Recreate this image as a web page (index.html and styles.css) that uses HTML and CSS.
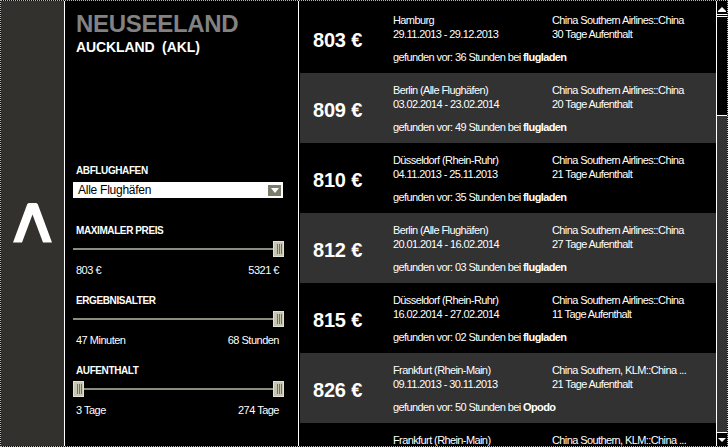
FILE: index.html
```html
<!DOCTYPE html>
<html lang="de">
<head>
<meta charset="utf-8">
<title>Neuseeland – Flüge</title>
<link rel="stylesheet" href="styles.css">
</head>
<body>
<div class="frame">
  <div class="strip">
    <svg class="logo" width="42" height="42" viewBox="0 0 42 42">
      <path d="M1 40.5 L15.2 2.3 Q16 1 17.5 1 L23.5 1 Q25 1 25.8 2.3 L40 40.5 L31 40.5 L20.5 12.5 L10 40.5 Z" fill="#fff"/>
    </svg>
  </div>
  <aside class="sidebar">
    <h1 class="country">NEUSEELAND</h1>
    <h2 class="city">AUCKLAND&nbsp; (AKL)</h2>

    <div class="field first">
      <div class="label">ABFLUGHAFEN</div>
      <div class="select">
        <span>Alle Flughäfen</span>
        <span class="select-btn"><span class="tri-down"></span></span>
      </div>
    </div>

    <div class="field">
      <div class="label">MAXIMALER PREIS</div>
      <div class="slider">
        <div class="track"></div>
        <div class="handle right"></div>
      </div>
      <div class="values"><span>803 €</span><span>5321 €</span></div>
    </div>

    <div class="field">
      <div class="label">ERGEBNISALTER</div>
      <div class="slider">
        <div class="track"></div>
        <div class="handle right"></div>
      </div>
      <div class="values"><span>47 Minuten</span><span>68 Stunden</span></div>
    </div>

    <div class="field">
      <div class="label">AUFENTHALT</div>
      <div class="slider">
        <div class="track"></div>
        <div class="handle left"></div>
        <div class="handle right"></div>
      </div>
      <div class="values"><span>3 Tage</span><span>274 Tage</span></div>
    </div>
  </aside>

  <main class="list">
    <div class="row">
      <div class="price">803 €</div>
      <div class="c1">Hamburg<br>29.11.2013 - 29.12.2013</div>
      <div class="c2">China Southern Airlines::China<br>30 Tage Aufenthalt</div>
      <div class="found">gefunden vor: 36 Stunden bei <b>flugladen</b></div>
    </div>
    <div class="row alt">
      <div class="price">809 €</div>
      <div class="c1">Berlin (Alle Flughäfen)<br>03.02.2014 - 23.02.2014</div>
      <div class="c2">China Southern Airlines::China<br>20 Tage Aufenthalt</div>
      <div class="found">gefunden vor: 49 Stunden bei <b>flugladen</b></div>
    </div>
    <div class="row">
      <div class="price">810 €</div>
      <div class="c1">Düsseldorf (Rhein-Ruhr)<br>04.11.2013 - 25.11.2013</div>
      <div class="c2">China Southern Airlines::China<br>21 Tage Aufenthalt</div>
      <div class="found">gefunden vor: 35 Stunden bei <b>flugladen</b></div>
    </div>
    <div class="row alt">
      <div class="price">812 €</div>
      <div class="c1">Berlin (Alle Flughäfen)<br>20.01.2014 - 16.02.2014</div>
      <div class="c2">China Southern Airlines::China<br>27 Tage Aufenthalt</div>
      <div class="found">gefunden vor: 03 Stunden bei <b>flugladen</b></div>
    </div>
    <div class="row">
      <div class="price">815 €</div>
      <div class="c1">Düsseldorf (Rhein-Ruhr)<br>16.02.2014 - 27.02.2014</div>
      <div class="c2">China Southern Airlines::China<br>11 Tage Aufenthalt</div>
      <div class="found">gefunden vor: 02 Stunden bei <b>flugladen</b></div>
    </div>
    <div class="row alt">
      <div class="price">826 €</div>
      <div class="c1">Frankfurt (Rhein-Main)<br>09.11.2013 - 30.11.2013</div>
      <div class="c2">China Southern, KLM::China ...<br>21 Tage Aufenthalt</div>
      <div class="found">gefunden vor: 50 Stunden bei <b>Opodo</b></div>
    </div>
    <div class="row">
      <div class="price"></div>
      <div class="c1">Frankfurt (Rhein-Main)</div>
      <div class="c2">China Southern, KLM::China ...</div>
    </div>
  </main>

  <div class="scrollbar">
    <div class="sb-btn up"><span class="sb-tri up"></span></div>
    <div class="sb-thumb"></div>
    <div class="sb-track"></div>
    <div class="sb-btn down"><span class="sb-tri down"></span></div>
  </div>
</div>
</body>
</html>
```

FILE: styles.css
```css
* { box-sizing: border-box; }

html, body {
  margin: 0;
  padding: 0;
  background: #000;
}

body {
  width: 728px;
  height: 447px;
  overflow: hidden;
  font-family: "Liberation Sans", Arial, Helvetica, sans-serif;
  color: #fff;
}

.frame {
  width: 728px;
  height: 447px;
  border: 1px dotted #b8b8b8;
  display: flex;
  background: #000;
}

/* left dark strip with logo */
.strip {
  width: 63px;
  flex: none;
  background: #32312d;
  display: flex;
  align-items: center;
  justify-content: center;
}
.logo { display: block; margin-left: 1px; margin-top: -2px; }

/* sidebar */
.sidebar {
  width: 235px;
  flex: none;
  border-left: 1px solid #fff;
  border-right: 1px solid #fff;
  background: #000;
  padding: 9px 0 0 11px;
}

.country {
  margin: 0;
  font-size: 24px;
  line-height: 28px;
  font-weight: bold;
  letter-spacing: -0.3px;
  color: #828282;
}

.city {
  margin: 1px 0 0 0;
  font-size: 14px;
  line-height: 16px;
  font-weight: bold;
  letter-spacing: -0.1px;
  color: #fff;
}

.field { margin-top: 18px; }
.field.first { margin-top: 110px; }
.field:nth-of-type(2) { margin-top: 27px; }

.label {
  font-size: 10px;
  line-height: 12px;
  font-weight: bold;
  letter-spacing: -0.4px;
  color: #fff;
}

.select {
  margin: 5px 0 0 -3px;
  width: 210px;
  height: 16px;
  background: #fff;
  color: #000;
  font-size: 12px;
  line-height: 16px;
  letter-spacing: -0.25px;
  padding-left: 5px;
  display: flex;
  align-items: center;
  justify-content: space-between;
}
.select-btn {
  width: 13px;
  height: 11px;
  margin-right: 2px;
  background: #7b7b69;
  display: flex;
  align-items: center;
  justify-content: center;
}
.tri-down {
  width: 0;
  height: 0;
  border-left: 4px solid transparent;
  border-right: 4px solid transparent;
  border-top: 5px solid #fff;
}

.slider {
  position: relative;
  margin: 4px 0 0 -3px;
  width: 211px;
  height: 16px;
  display: flex;
  align-items: center;
}
.track {
  width: 100%;
  height: 2px;
  background: #8d8d7d;
}
.handle {
  position: absolute;
  top: 0;
  width: 11px;
  height: 16px;
  border: 1px solid #e2e2d4;
  background:
    repeating-linear-gradient(90deg, #c6c6b2 0 1px, #6f6f60 1px 2px) content-box,
    #c6c6b2;
  padding: 2px 1px 2px 2px;
}
.handle.right { right: 0; }
.handle.left { left: 0; }

.values {
  margin-top: 6px;
  width: 203px;
  display: flex;
  justify-content: space-between;
  font-size: 11px;
  line-height: 14px;
  letter-spacing: -0.5px;
}

/* results list */
.list {
  width: 417px;
  flex: none;
  padding: 2px 0 0 1px;
  overflow: hidden;
}

.row {
  height: 70px;
  display: grid;
  grid-template-columns: 93px 159px 1fr;
  grid-template-rows: auto auto;
  align-content: start;
  padding-top: 10px;
  font-size: 11px;
  line-height: 14px;
  letter-spacing: -0.6px;
  background: #000;
  white-space: nowrap;
}
.row.alt { background: #323232; }

.price {
  grid-row: 1 / span 2;
  align-self: start;
  padding: 16px 0 0 13px;
  font-size: 20px;
  line-height: 23px;
  font-weight: bold;
  letter-spacing: -0.2px;
}
.c1 { grid-column: 2; grid-row: 1; }
.c2 { grid-column: 3; grid-row: 1; }
.found {
  grid-column: 2 / span 2;
  grid-row: 2;
  margin-top: 9px;
}
.found b { font-weight: bold; }

/* scrollbar */
.scrollbar {
  width: 11px;
  flex: none;
  border-left: 1px solid #fff;
  display: flex;
  flex-direction: column;
  background: #000;
}
.sb-btn {
  height: 12px;
  flex: none;
  display: flex;
  justify-content: center;
  background: #000;
}
.sb-btn.up {
  align-items: flex-end;
  padding-bottom: 1px;
  border-bottom: 1px solid #000;
}
.sb-btn.down {
  height: 14px;
  align-items: center;
  border-top: 1px solid #fff;
}
.sb-tri {
  width: 0;
  height: 0;
  border-left: 4px solid transparent;
  border-right: 4px solid transparent;
}
.sb-tri.up { border-bottom: 4px solid #fff; box-shadow: 0 1px 0 #fff; }
.sb-tri.down { border-top: 4px solid #fff; }

.sb-thumb {
  flex: none;
  margin-top: 1px;
  height: 102px;
  border-top: 3px double #fff;
  border-bottom: 1px solid #fff;
  background: #000;
}
.sb-track {
  flex: 1;
  background: #343434;
}
```
